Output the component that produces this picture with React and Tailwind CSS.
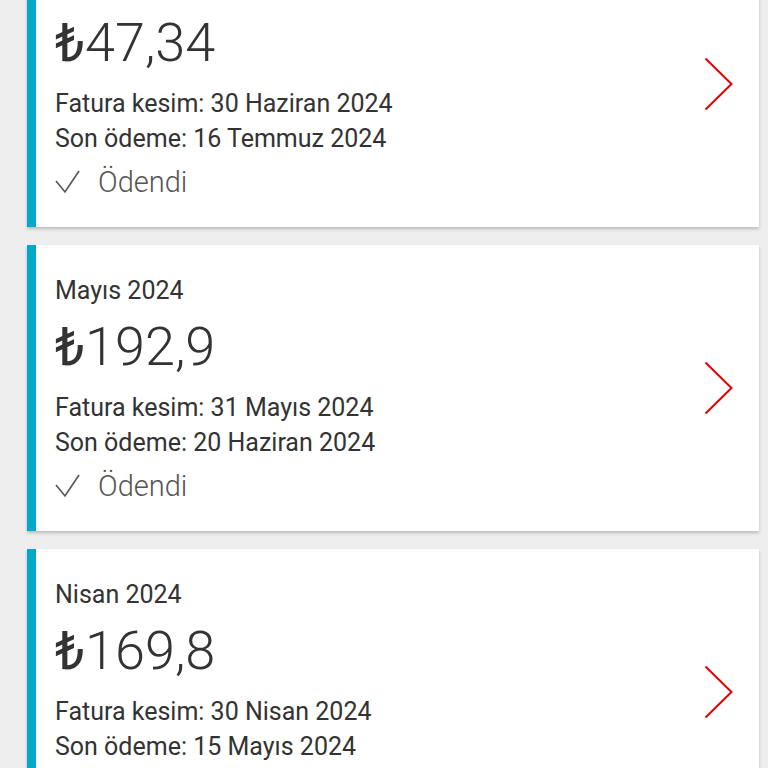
import React from "react";

const bills = [
  { month: "Haziran 2024", amount: "47,34", cut: "30 Haziran 2024", due: "16 Temmuz 2024" },
  { month: "Mayıs 2024", amount: "192,9", cut: "31 Mayıs 2024", due: "20 Haziran 2024" },
  { month: "Nisan 2024", amount: "169,8", cut: "30 Nisan 2024", due: "15 Mayıs 2024" },
];

function Card({ b }) {
  return (
    <div className="flex bg-white border-l-[9px] border-[#00a8c9] shadow-[0_2px_3px_rgba(0,0,0,0.22)] h-[286px] shrink-0">
      <div className="flex-1 self-start pl-[19px] pt-[30px] text-[#333333]">
        <div className="text-[25px] leading-[32px]">{b.month}</div>
        <div className="mt-[8px] text-[54px] leading-[64px] font-light">
          <span className="font-normal">₺</span>{b.amount}
        </div>
        <div className="mt-[11px] text-[25px] leading-[35px]">Fatura kesim: {b.cut}</div>
        <div className="text-[25px] leading-[35px]">Son ödeme: {b.due}</div>
        <div className="mt-[6px] flex items-center text-[29px] leading-[40px] font-light text-[#555555]">
          <svg width="26" height="26" viewBox="0 0 26 26" className="mr-[17px] mt-[2px]">
            <path d="M1 11 L10 22 L24 1" fill="none" stroke="#555555" strokeWidth="1.6" />
          </svg>
          Ödendi
        </div>
      </div>
      <svg width="30" height="54" viewBox="0 0 30 54" className="self-center mr-[25px]">
        <path d="M1.5 1.5 L27.5 27 L1.5 52.5" fill="none" stroke="#e60000" strokeWidth="2" />
      </svg>
    </div>
  );
}

export default function App() {
  return (
    <div
      className="w-[768px] h-[768px] overflow-hidden bg-[#eeeeee]"
      style={{ fontFamily: "Roboto, 'Noto Sans', sans-serif" }}
    >
      <div className="flex flex-col gap-[18px] pl-[27px] pr-[9px] mt-[-59px]">
        {bills.map((b) => (
          <Card key={b.month} b={b} />
        ))}
      </div>
    </div>
  );
}
